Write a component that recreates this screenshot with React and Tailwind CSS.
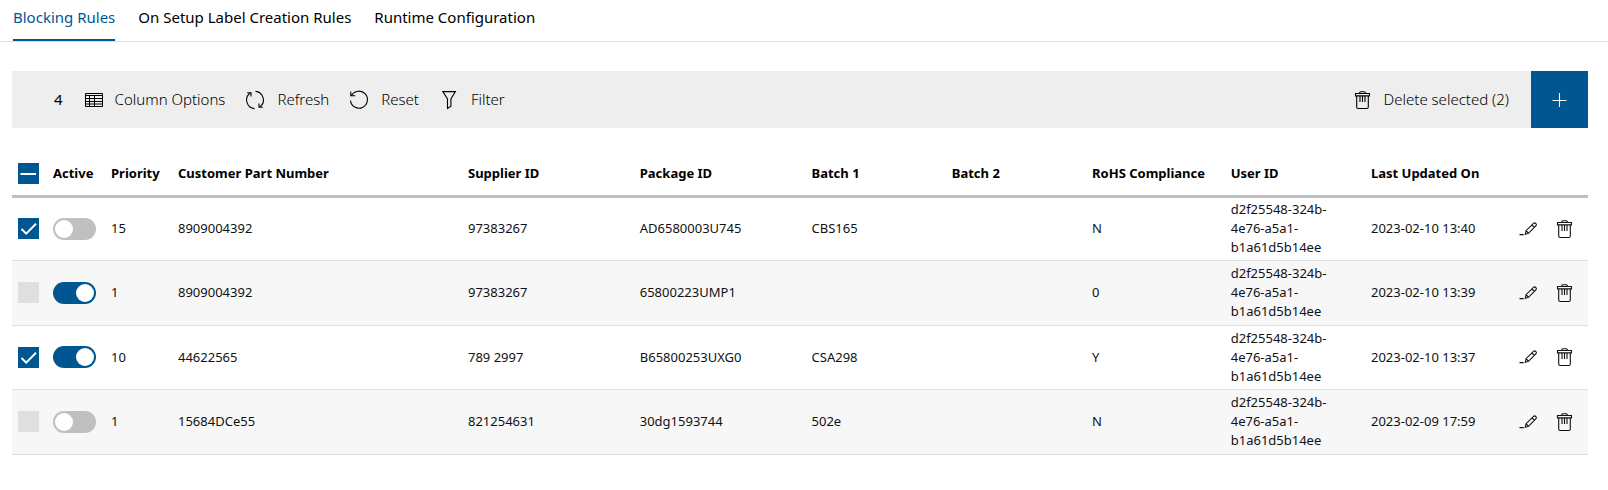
import React, { useEffect, useRef, useState } from 'react';

const tabs = ['Blocking Rules', 'On Setup Label Creation Rules', 'Runtime Configuration'];

const userId = 'd2f25548-324b-4e76-a5a1-b1a61d5b14ee';

const initialRules = [
  { id: 1, selected: true, active: false, priority: 15, part: '8909004392', supplier: '97383267', pkg: 'AD6580003U745', batch1: 'CBS165', batch2: '', rohs: 'N', updated: '2023-02-10 13:40' },
  { id: 2, selected: false, active: true, priority: 1, part: '8909004392', supplier: '97383267', pkg: '65800223UMP1', batch1: '', batch2: '', rohs: '0', updated: '2023-02-10 13:39' },
  { id: 3, selected: true, active: true, priority: 10, part: '44622565', supplier: '789 2997', pkg: 'B65800253UXG0', batch1: 'CSA298', batch2: '', rohs: 'Y', updated: '2023-02-10 13:37' },
  { id: 4, selected: false, active: false, priority: 1, part: '15684DCe55', supplier: '821254631', pkg: '30dg1593744', batch1: '502e', batch2: '', rohs: 'N', updated: '2023-02-09 17:59' },
];

// width class for every data column, the last data column takes what is left
const columns = [
  { label: 'Active', width: 'w-[58px]' },
  { label: 'Priority', width: 'w-[67px]' },
  { label: 'Customer Part Number', width: 'w-[18.4%]' },
  { label: 'Supplier ID', width: 'w-[10.9%]' },
  { label: 'Package ID', width: 'w-[10.9%]' },
  { label: 'Batch 1', width: 'w-[8.9%]' },
  { label: 'Batch 2', width: 'w-[8.9%]' },
  { label: 'RoHS Compliance', width: 'w-[8.8%]' },
  { label: 'User ID', width: 'w-[8.9%]' },
  { label: 'Last Updated On', width: '' },
];

const Icon = ({ children }) => (
  <svg className="size-5 shrink-0" viewBox="0 0 20 20" fill="none" stroke="currentColor" strokeWidth="1.1" aria-hidden="true">
    {children}
  </svg>
);

const TableIcon = () => (
  <Icon>
    <path d="M2.5 3.5h17v13h-17zM2.5 5.5h17M2.5 8.5h17M2.5 11.5h17M2.5 14h17M6.5 6v10.5M11.5 6v10.5" strokeWidth="1" />
  </Icon>
);

const RefreshIcon = () => (
  <Icon>
    <path d="M9.5 18.6A8.6 8.6 0 0 1 5 3.2M2.2 2.8h3.8v3.8M10.5 1.4A8.6 8.6 0 0 1 15 16.8M17.8 17.2h-3.8v-3.8" />
  </Icon>
);

const ResetIcon = () => (
  <Icon>
    <path d="M2.6 5.4a8.5 8.5 0 1 1-1.1 5.2M1.8 1.6v4.2h4.4" />
  </Icon>
);

const FilterIcon = () => (
  <Icon>
    <path d="M3.8 1.6h12.6L11.9 9v7.2l-3.4 2.2V9z" />
  </Icon>
);

const TrashIcon = () => (
  <Icon>
    <path d="M3.5 3.5h14v2.4h-14zM7.5 3.5q0-1.8 1.4-1.8h3.2q1.4 0 1.4 1.8M4.7 5.9v11.2q0 1.4 1.4 1.4h8.8q1.4 0 1.4-1.4V5.9M8 6v6M10.5 6v6M13 6v6" />
  </Icon>
);

const EditIcon = () => (
  <Icon>
    <path d="M1.5 15.6h4.2M7.2 15.3l.9-3.6 7.4-7.3q1.1-1 2.3.1 1.1 1.2 0 2.3l-7.3 7.5zM8.1 11.7l2.4 2.6M13.9 5.9l2.5 2.4" />
  </Icon>
);

const Checkbox = ({ checked, indeterminate = false, label, onChange }) => {
  const ref = useRef(null);

  useEffect(() => {
    ref.current.indeterminate = indeterminate;
  }, [indeterminate]);

  return (
    <label className="grid size-[21px] cursor-pointer">
      <input
        ref={ref}
        type="checkbox"
        aria-label={label}
        checked={checked}
        onChange={onChange}
        className="col-start-1 row-start-1 size-[21px] appearance-none bg-[#dfdfdf] checked:bg-[#005691] indeterminate:bg-[#005691]"
      />
      <svg className="pointer-events-none col-start-1 row-start-1 size-[21px] text-white" viewBox="0 0 21 21" fill="none" stroke="currentColor" strokeWidth="2" aria-hidden="true">
        {indeterminate && <path d="M2.5 11h15.5" />}
        {!indeterminate && checked && <path d="M3.5 11l4.7 4.7L18 5.8" />}
      </svg>
    </label>
  );
};

const Toggle = ({ checked, label, onChange }) => (
  <input
    type="checkbox"
    role="switch"
    aria-label={label}
    checked={checked}
    onChange={onChange}
    className="flex h-[22px] w-[43px] cursor-pointer appearance-none items-center rounded-full bg-[#bfc0c2] px-[2px] before:size-[18px] before:rounded-full before:bg-white checked:justify-end checked:bg-[#005691]"
  />
);

const ToolbarButton = ({ icon, children }) => (
  <button type="button" className="flex cursor-pointer items-center gap-3 whitespace-nowrap">
    {icon}
    {children}
  </button>
);

const App = () => {
  const [activeTab, setActiveTab] = useState(tabs[0]);
  const [rules, setRules] = useState(initialRules);

  const selectedCount = rules.filter((rule) => rule.selected).length;
  const allSelected = rules.length > 0 && selectedCount === rules.length;

  const toggleField = (id, field) => {
    setRules(rules.map((rule) => (rule.id === id ? { ...rule, [field]: !rule[field] } : rule)));
  };

  const toggleAll = () => {
    setRules(rules.map((rule) => ({ ...rule, selected: !allSelected })));
  };

  const removeRule = (id) => setRules(rules.filter((rule) => rule.id !== id));

  const removeSelected = () => setRules(rules.filter((rule) => !rule.selected));

  return (
    <div className="min-h-screen bg-white font-['Noto_Sans','Open_Sans',sans-serif] text-black">
      <nav className="flex h-[42px] gap-[23px] border-b border-[#dfdfdf] pl-[13px] text-[15px]">
        {tabs.map((tab) => (
          <button
            key={tab}
            type="button"
            onClick={() => setActiveTab(tab)}
            className={`cursor-pointer border-b-2 pb-1 whitespace-nowrap ${
              tab === activeTab ? 'border-[#005691] text-[#005691]' : 'border-transparent'
            }`}
          >
            {tab}
          </button>
        ))}
      </nav>

      <main className="pt-[29px] pr-5 pl-3">
        <div className="flex h-[57px] items-center bg-[#eeeeee] pl-[42px] text-[15px] font-light text-black">
          <div className="flex items-center gap-5">
            <span className="font-normal">{rules.length}</span>
            <ToolbarButton icon={<TableIcon />}>Column Options</ToolbarButton>
            <ToolbarButton icon={<RefreshIcon />}>Refresh</ToolbarButton>
            <ToolbarButton icon={<ResetIcon />}>Reset</ToolbarButton>
            <ToolbarButton icon={<FilterIcon />}>Filter</ToolbarButton>
          </div>
          <div className="ml-auto flex items-center gap-[22px]">
            <button type="button" onClick={removeSelected} className="flex cursor-pointer items-center gap-3 whitespace-nowrap">
              <TrashIcon />
              Delete selected ({selectedCount})
            </button>
            <button type="button" aria-label="Add rule" className="flex size-[57px] cursor-pointer items-center justify-center bg-[#005691] text-white">
              <Icon>
                <path d="M9.5 3v14M2.5 10.5h14" />
              </Icon>
            </button>
          </div>
        </div>

        <table className="mt-[25px] w-full table-fixed border-collapse text-left text-[13px] leading-[19px]">
          <thead>
            <tr className="h-[43px] border-b-3 border-[#bfc0c2]">
              <th className="w-[35px] px-[6px]">
                <Checkbox
                  label="Select all rules"
                  checked={allSelected}
                  indeterminate={selectedCount > 0 && !allSelected}
                  onChange={toggleAll}
                />
              </th>
              {columns.map((column) => (
                <th key={column.label} className={`pl-[6px] font-bold whitespace-nowrap ${column.width}`}>
                  {column.label}
                </th>
              ))}
              <th className="w-[38px]" aria-label="Edit"></th>
              <th className="w-[38px]" aria-label="Delete"></th>
            </tr>
          </thead>
          <tbody className="text-[#111111]">
            {rules.map((rule) => (
              <tr key={rule.id} className="h-16 border-b border-[#dfdfdf] even:h-[65px] even:bg-[#f7f7f7]">
                <td className="px-[6px]">
                  <Checkbox label={`Select rule ${rule.id}`} checked={rule.selected} onChange={() => toggleField(rule.id, 'selected')} />
                </td>
                <td className="pl-[6px]">
                  <Toggle label={`Rule ${rule.id} active`} checked={rule.active} onChange={() => toggleField(rule.id, 'active')} />
                </td>
                <td className="pl-[6px]">{rule.priority}</td>
                <td className="pl-[6px]">{rule.part}</td>
                <td className="pl-[6px]">{rule.supplier}</td>
                <td className="pl-[6px]">{rule.pkg}</td>
                <td className="pl-[6px]">{rule.batch1}</td>
                <td className="pl-[6px]">{rule.batch2}</td>
                <td className="pl-[6px]">{rule.rohs}</td>
                <td className="pr-5 pl-[6px]">{userId}</td>
                <td className="pl-[6px] whitespace-nowrap">{rule.updated}</td>
                <td className="pl-[6px]">
                  <button type="button" aria-label="Edit rule" className="flex cursor-pointer">
                    <EditIcon />
                  </button>
                </td>
                <td className="pl-1">
                  <button type="button" aria-label="Delete rule" onClick={() => removeRule(rule.id)} className="flex cursor-pointer">
                    <TrashIcon />
                  </button>
                </td>
              </tr>
            ))}
          </tbody>
        </table>
      </main>
    </div>
  );
};

export default App;
